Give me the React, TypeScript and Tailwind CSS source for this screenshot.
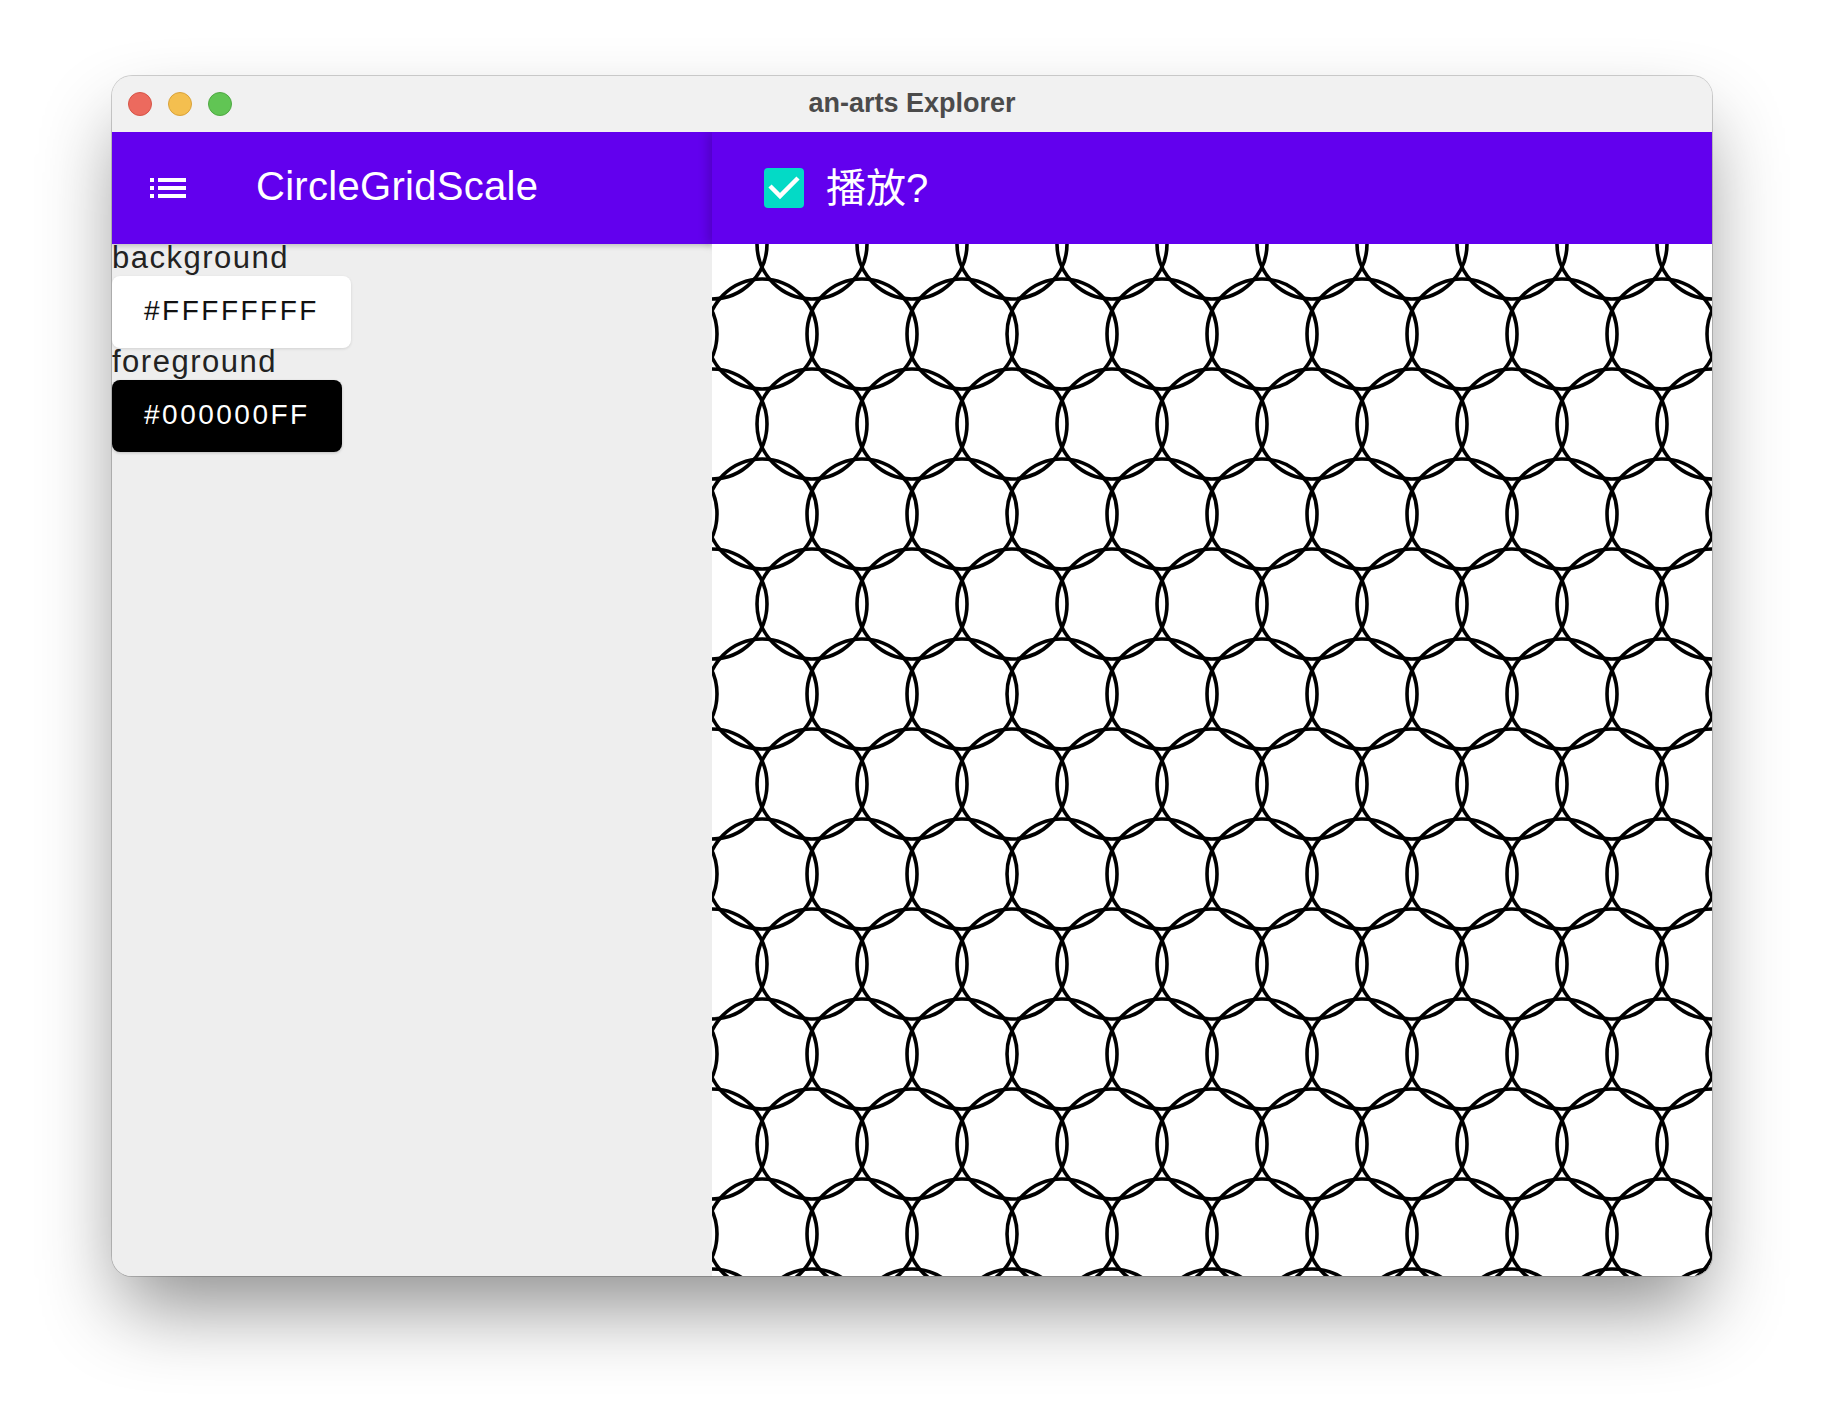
import React from "react";

const R = 55;
const DX = 100;
const DY = 90;
const CANVAS_W = 1000;
const CANVAS_H = 1032;

type Circle = { cx: number; cy: number };

function buildCircles(): Circle[] {
  const list: Circle[] = [];
  for (let row = 0; row * DY <= CANVAS_H + R; row++) {
    const offset = row % 2 === 0 ? 0 : 50;
    for (let cx = offset - DX; cx <= CANVAS_W + R; cx += DX) {
      list.push({ cx, cy: row * DY });
    }
  }
  return list;
}

const circles = buildCircles();

function TrafficLights() {
  return (
    <div className="flex items-center gap-[16px] pl-[16px]">
      <span className="h-[24px] w-[24px] rounded-full border border-[#d65447] bg-[#ec6a5e]" />
      <span className="h-[24px] w-[24px] rounded-full border border-[#d9a23a] bg-[#f4bf4f]" />
      <span className="h-[24px] w-[24px] rounded-full border border-[#4fa843] bg-[#61c554]" />
    </div>
  );
}

function MenuIcon() {
  return (
    <svg width="48" height="48" viewBox="0 0 24 24" fill="white">
      <path d="M3 13h2v-2H3v2zm0 4h2v-2H3v2zm0-8h2V7H3v2zm4 4h14v-2H7v2zm0 4h14v-2H7v2zM7 7v2h14V7H7z" />
    </svg>
  );
}

function CheckBox() {
  return (
    <div className="flex h-[40px] w-[40px] items-center justify-center rounded-[4px] bg-[#03dac6]">
      <svg width="40" height="40" viewBox="0 0 40 40">
        <polyline
          points="6,18 16,28 34,10"
          fill="none"
          stroke="white"
          strokeWidth="4.5"
        />
      </svg>
    </div>
  );
}

function ColorButton({ label, dark }: { label: string; dark?: boolean }) {
  return (
    <div
      className={
        dark
          ? "flex h-[72px] w-fit items-center rounded-[8px] bg-black px-[32px] pb-[2px] text-[28px] tracking-[2.5px] text-white shadow-[0_1px_3px_rgba(0,0,0,0.2)]"
          : "flex h-[72px] w-fit items-center rounded-[8px] bg-white px-[32px] pb-[2px] text-[28px] tracking-[2.5px] text-[#111] shadow-[0_1px_3px_rgba(0,0,0,0.12)]"
      }
    >
      {label}
    </div>
  );
}

function CircleCanvas() {
  return (
    <svg
      width={CANVAS_W}
      height={CANVAS_H}
      viewBox={`0 0 ${CANVAS_W} ${CANVAS_H}`}
      className="block bg-white"
    >
      {circles.map((c, i) => (
        <circle
          key={i}
          cx={c.cx}
          cy={c.cy}
          r={R}
          fill="none"
          stroke="black"
          strokeWidth="3.6"
        />
      ))}
    </svg>
  );
}

export default function App() {
  return (
    <div className="h-[1424px] w-[1824px] bg-white pl-[112px] pt-[76px] font-['Liberation_Sans',Arial,sans-serif]">
      <div className="flex h-[1200px] w-[1600px] flex-col overflow-hidden rounded-[20px] bg-[#eeeeee] shadow-[0_40px_80px_-10px_rgba(0,0,0,0.45),0_0_0_1px_rgba(0,0,0,0.18)]">
        {/* title bar */}
        <div className="relative flex h-[56px] flex-none items-center bg-[#f1f1f1]">
          <TrafficLights />
          <div className="absolute inset-0 flex items-center justify-center pb-[2px] text-[27px] font-bold text-[#4b4b4b]">
            an-arts Explorer
          </div>
        </div>

        <div className="flex flex-1">
          {/* settings panel */}
          <div className="flex w-[600px] flex-none flex-col bg-[#eeeeee]">
            <div className="flex h-[112px] flex-none items-center bg-[#6200ee] shadow-[0_2px_5px_rgba(0,0,0,0.2)]">
              <div className="flex w-[112px] justify-center">
                <MenuIcon />
              </div>
              <div className="pb-[4px] pl-[32px] text-[40px] tracking-[0.3px] text-white">
                CircleGridScale
              </div>
            </div>
            <div className="h-[32px] text-[31px] leading-[28px] tracking-[1.5px] text-[#222]">
              background
            </div>
            <ColorButton label="#FFFFFFFF" />
            <div className="h-[32px] text-[31px] leading-[28px] tracking-[1.5px] text-[#222]">
              foreground
            </div>
            <ColorButton label="#000000FF" dark />
          </div>

          {/* preview */}
          <div className="flex flex-1 flex-col">
            <div className="flex h-[112px] flex-none items-center gap-[22px] bg-[#6200ee] pl-[52px] shadow-[-4px_0_10px_rgba(0,0,0,0.18)]">
              <CheckBox />
              <span className="font-['Liberation_Sans','Noto_Sans_CJK_SC',sans-serif] text-[40px] text-white">
                播放?
              </span>
            </div>
            <CircleCanvas />
          </div>
        </div>
      </div>
    </div>
  );
}
